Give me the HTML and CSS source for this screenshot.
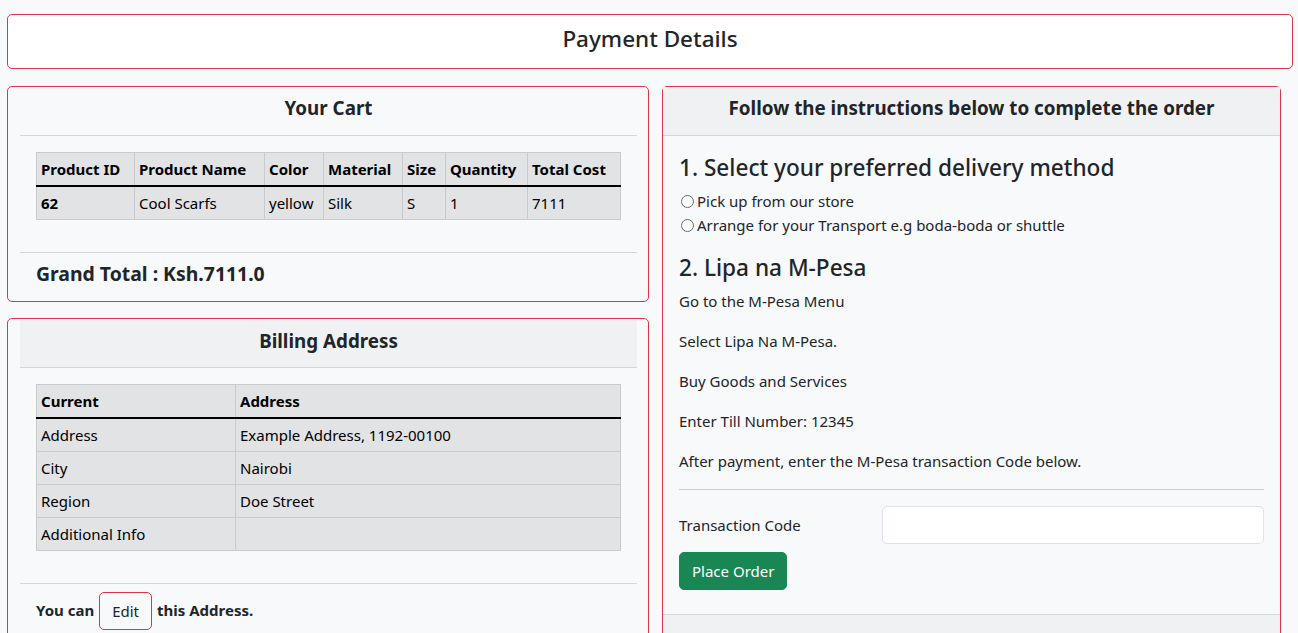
FILE: index.html
```html
<!DOCTYPE html>
<html lang="en">
<head>
<meta charset="utf-8">
<title>Payment Details</title>
<link rel="stylesheet" href="styles.css">
</head>
<body>
<div class="page">
  <header class="title-card">
    <h4 class="title">Payment Details</h4>
  </header>

  <div class="columns">
    <div class="col-left">
      <section class="card cart-card">
        <div class="card-head">
          <h5 class="head-text">Your Cart</h5>
        </div>
        <div class="card-body">
          <table class="tbl cart-tbl">
            <colgroup>
              <col class="c1"><col class="c2"><col class="c3"><col class="c4"><col class="c5"><col class="c6"><col class="c7">
            </colgroup>
            <thead>
              <tr><th>Product ID</th><th>Product Name</th><th>Color</th><th>Material</th><th>Size</th><th>Quantity</th><th>Total Cost</th></tr>
            </thead>
            <tbody>
              <tr><th>62</th><td>Cool Scarfs</td><td>yellow</td><td>Silk</td><td>S</td><td>1</td><td>7111</td></tr>
            </tbody>
          </table>
        </div>
        <div class="card-foot total-foot">
          <h5 class="total">Grand Total : Ksh.7111.0</h5>
        </div>
      </section>

      <section class="card bill-card">
        <div class="card-head shaded">
          <h5 class="head-text">Billing Address</h5>
        </div>
        <div class="card-body">
          <table class="tbl bill-tbl">
            <colgroup><col class="b1"><col class="b2"></colgroup>
            <thead>
              <tr><th>Current</th><th>Address</th></tr>
            </thead>
            <tbody>
              <tr><td>Address</td><td>Example Address, 1192-00100</td></tr>
              <tr><td>City</td><td>Nairobi</td></tr>
              <tr><td>Region</td><td>Doe Street</td></tr>
              <tr><td>Additional Info</td><td></td></tr>
            </tbody>
          </table>
        </div>
        <div class="card-foot">
          <p class="edit-line"><b>You can</b> <button class="btn-edit" type="button">Edit</button> <b>this Address.</b></p>
        </div>
      </section>
    </div>

    <section class="card order-card">
      <div class="card-head shaded flush">
        <h5 class="head-text">Follow the instructions below to complete the order</h5>
      </div>
      <div class="order-body">
        <h3 class="step">1. Select your preferred delivery method</h3>
        <div class="radios">
          <label class="radio"><span class="dot"></span>Pick up from our store</label>
          <label class="radio"><span class="dot"></span>Arrange for your Transport e.g boda-boda or shuttle</label>
        </div>
        <h3 class="step">2. Lipa na M-Pesa</h3>
        <p class="line">Go to the M-Pesa Menu</p>
        <p class="line">Select Lipa Na M-Pesa.</p>
        <p class="line">Buy Goods and Services</p>
        <p class="line">Enter Till Number: 12345</p>
        <p class="line">After payment, enter the M-Pesa transaction Code below.</p>
        <hr class="rule">
        <div class="form-row">
          <label class="form-label" for="code">Transaction Code</label>
          <input class="form-input" id="code" type="text">
        </div>
        <button class="btn-order" type="button">Place Order</button>
      </div>
      <div class="order-foot"></div>
    </section>
  </div>
</div>
</body>
</html>
```
FILE: styles.css
```css
* { box-sizing: border-box; }

html, body {
  margin: 0;
  background: #f8f9fa;
}

body {
  font-family: "Noto Sans", "Open Sans", sans-serif;
  font-size: 15px;
  line-height: 24px;
  color: #212529;
}

.page {
  padding: 14px 0 0 7px;
}

.title-card {
  width: 1286px;
  height: 55px;
  background: #fff;
  border: 1px solid #dc3545;
  border-radius: 5px;
  display: flex;
  align-items: center;
  justify-content: center;
}

.title {
  margin: 0 0 5px 0;
  font-size: 22.5px;
  font-weight: 500;
  line-height: 28px;
}

.columns {
  display: flex;
  align-items: flex-start;
  gap: 13px;
  margin-top: 17px;
}

.col-left {
  width: 642px;
  display: flex;
  flex-direction: column;
  gap: 16px;
}

.card {
  border: 1px solid #dc3545;
  border-radius: 5px;
}

.cart-card,
.bill-card {
  padding: 0 11px 0 12px;
}

.bill-card {
  padding-top: 1px;
}

.card-head {
  height: 49px;
  border-bottom: 1px solid #d5d6d7;
  display: flex;
  align-items: center;
  justify-content: center;
}

.card-head.shaded {
  background: #f0f1f2;
}

.bill-card .card-head {
  height: 48px;
}

.head-text {
  margin: 0 0 6px 0;
  font-size: 18.8px;
  font-weight: 700;
  line-height: 24px;
}

.card-body {
  padding: 16px 17px 16px 16px;
}

.card-foot {
  border-top: 1px solid #d5d6d7;
  padding: 8px 16px;
}

.total-foot {
  padding: 7px 16px 13px 16px;
}

.total {
  margin: 0;
  font-size: 19.4px;
  font-weight: 700;
  line-height: 28px;
}

.tbl {
  width: 100%;
  border-collapse: collapse;
  table-layout: fixed;
  background: #e2e3e5;
  color: #000;
  margin: 0 0 16px 0;
}

.tbl th,
.tbl td {
  border: 1px solid #c9cacc;
  padding: 4px 4px;
  line-height: 24px;
  text-align: left;
  white-space: nowrap;
  overflow: hidden;
}

.tbl th {
  font-weight: 700;
}

.tbl td {
  font-weight: 400;
}

.tbl thead th {
  border-bottom: 2px solid #000;
}

.cart-tbl .c1 { width: 98px; }
.cart-tbl .c2 { width: 130px; }
.cart-tbl .c3 { width: 59px; }
.cart-tbl .c4 { width: 79px; }
.cart-tbl .c5 { width: 43px; }
.cart-tbl .c6 { width: 82px; }
.cart-tbl .c7 { width: 93px; }

.bill-tbl .b1 { width: 199px; }
.bill-tbl .b2 { width: 385px; }

.edit-line {
  margin: 0;
  display: flex;
  align-items: center;
  gap: 5px;
  height: 38px;
}

.edit-line b {
  font-weight: 700;
  margin-bottom: 3px;
}

.btn-edit {
  font-family: inherit;
  font-size: 15px;
  line-height: 24px;
  color: #212529;
  background: transparent;
  border: 1px solid #dc3545;
  border-radius: 5px;
  padding: 6px 12px;
}

.order-card {
  width: 619px;
}

.order-body {
  padding: 16px 16px 24px 16px;
}

.step {
  margin: 0 0 5px 0;
  font-size: 22.6px;
  font-weight: 500;
  line-height: 32px;
}

.radios {
  margin-bottom: 15px;
}

.radio {
  display: flex;
  align-items: center;
  height: 24px;
}

.dot {
  width: 13px;
  height: 13px;
  border: 1px solid #6b6b6b;
  border-radius: 50%;
  background: #fff;
  margin: 0 3px 0 2px;
  flex: none;
}

.line {
  margin: 0 0 16px 0;
}

.rule {
  border: 0;
  border-top: 1px solid #cacbcc;
  margin: 16px 0;
}

.form-row {
  display: grid;
  grid-template-columns: 203px 1fr;
  align-items: center;
}

.form-label {
  display: block;
}

.form-input {
  height: 38px;
  border: 1px solid #dee2e6;
  border-radius: 5px;
  background: #fff;
  font-family: inherit;
  font-size: 15px;
  padding: 6px 12px;
}

.btn-order {
  margin-top: 8px;
  font-family: inherit;
  font-size: 15px;
  line-height: 24px;
  color: #fff;
  background: #198754;
  border: 1px solid #198754;
  border-radius: 5px;
  padding: 6px 12px;
}

.order-foot {
  border-top: 1px solid #d5d6d7;
  background: #f0f1f2;
  height: 41px;
  border-radius: 0 0 4px 4px;
}
```
